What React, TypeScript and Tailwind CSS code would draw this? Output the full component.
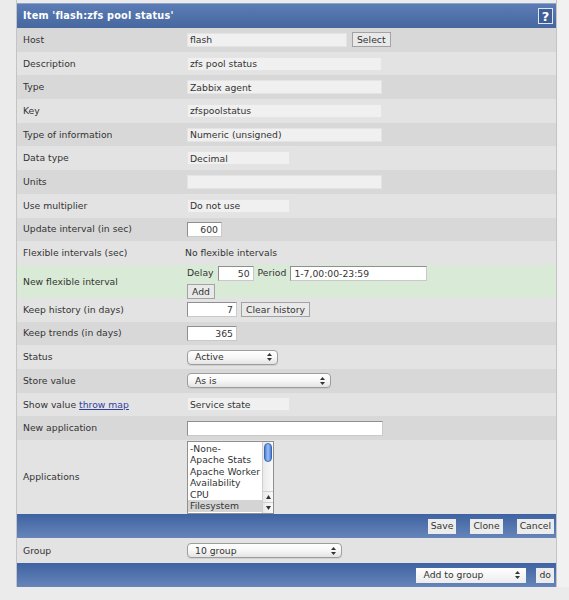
import React from 'react';

const font = { fontFamily: '"DejaVu Sans", Verdana, sans-serif' };

const Arrows = () => (
  <svg width="5" height="8" viewBox="0 0 5 8" className="shrink-0">
    <path d="M2.5 0 L5 3 L0 3 Z" fill="#333" />
    <path d="M2.5 8 L5 5 L0 5 Z" fill="#333" />
  </svg>
);

const Sel = ({ w, text }: { w: string; text: string }) => (
  <div className={`${w} h-[15px] rounded-[4px] border border-[#9d9d9d] bg-gradient-to-b from-white via-[#f7f7f7] to-[#e4e4e4] flex items-center justify-between pl-[7px] pr-[5px] shadow-[0_1px_0_rgba(0,0,0,0.08)]`}>
    <span className="leading-none">{text}</span>
    <Arrows />
  </div>
);

const RO = ({ w, text }: { w: string; text?: string }) => (
  <div className={`${w} h-[14px] bg-[#f0f0f0] border border-[#e4e4e4] px-[2px] flex items-center leading-none`}>{text}</div>
);

const Inp = ({ w, text, right }: { w: string; text?: string; right?: boolean }) => (
  <div className={`${w} h-[15px] bg-white border border-[#8f8f8f] border-b-[#c9c9c9] border-r-[#c9c9c9] px-[3px] flex items-center leading-none ${right ? 'justify-end' : ''}`}>{text}</div>
);

const Btn = ({ text }: { text: string }) => (
  <div className="h-[15px] px-[4px] bg-[#e9e9e9] border border-[#a3a3a3] flex items-center leading-none">{text}</div>
);

const BarBtn = ({ text }: { text: string }) => (
  <div className="h-[15px] px-[3px] bg-[#ececec] flex items-center leading-none">{text}</div>
);

const Row = ({ label, children, dark, h = 'h-[23.7px]', green }: { label: React.ReactNode; children?: React.ReactNode; dark?: boolean; h?: string; green?: boolean }) => (
  <div className={`grid grid-cols-[170px_1fr] ${h} ${green ? 'bg-[#d9ebd6]' : dark ? 'bg-[#d8d8d8]' : 'bg-[#e3e3e3]'}`}>
    <div className="flex items-center pl-[6px]">{label}</div>
    <div className="flex items-center">{children}</div>
  </div>
);

const apps = ['-None-', 'Apache Stats', 'Apache Worker', 'Availability', 'CPU', 'Filesystem'];

export default function App() {
  return (
    <div className="min-h-[600px] bg-[#ebebeb] text-[9.25px] text-[#333]" style={font}>
      <div className="flex">
        <div className="w-4 shrink-0" />
        <div className="w-[541px] border-l border-r border-[#c4c4c4] pt-[3px]">
          {/* header */}
          <div className="h-[25px] bg-gradient-to-b from-[#5b7cb5] to-[#46689f] border-t border-[#8ea5c9] flex items-center justify-between pl-[6px] pr-[3px]">
            <span className="text-white font-bold text-[9.7px] tracking-[0.2px]">Item 'flash:zfs pool status'</span>
            <div className="w-[15px] h-[16px] border border-[#dfe6f1] bg-[#3e5f97] flex items-center justify-center text-white font-bold text-[13px] leading-none">?</div>
          </div>

          <Row label="Host" dark>
            <div className="flex items-center gap-[5px]">
              <RO w="w-[160px]" text="flash" />
              <Btn text="Select" />
            </div>
          </Row>
          <Row label="Description"><RO w="w-[195px]" text="zfs pool status" /></Row>
          <Row label="Type" dark><RO w="w-[195px]" text="Zabbix agent" /></Row>
          <Row label="Key"><RO w="w-[195px]" text="zfspoolstatus" /></Row>
          <Row label="Type of information" dark><RO w="w-[195px]" text="Numeric (unsigned)" /></Row>
          <Row label="Data type"><RO w="w-[103px]" text="Decimal" /></Row>
          <Row label="Units" dark><RO w="w-[195px]" /></Row>
          <Row label="Use multiplier"><RO w="w-[103px]" text="Do not use" /></Row>
          <Row label="Update interval (in sec)" dark><Inp w="w-[35px]" text="600" right /></Row>
          <Row label="Flexible intervals (sec)"><span className="-ml-[2px]">No flexible intervals</span></Row>
          <Row label="New flexible interval" green h="h-[33px]">
            <div className="flex flex-col gap-[3px] pt-[1px]">
              <div className="flex items-center gap-[4px]">
                <span>Delay</span>
                <Inp w="w-[36px]" text="50" right />
                <span>Period</span>
                <Inp w="w-[137px]" text="1-7,00:00-23:59" />
              </div>
              <div className="flex"><Btn text="Add" /></div>
            </div>
          </Row>
          <Row label="Keep history (in days)">
            <div className="flex items-center gap-[4px]">
              <Inp w="w-[50px]" text="7" right />
              <Btn text="Clear history" />
            </div>
          </Row>
          <Row label="Keep trends (in days)" dark><Inp w="w-[50px]" text="365" right /></Row>
          <Row label="Status"><Sel w="w-[91px]" text="Active" /></Row>
          <Row label="Store value" dark><Sel w="w-[144px]" text="As is" /></Row>
          <Row label={<span>Show value <span className="text-[#3341a0] underline">throw map</span></span>}>
            <RO w="w-[103px]" text="Service state" />
          </Row>
          <Row label="New application" dark><Inp w="w-[196px]" /></Row>
          <Row label="Applications" h="h-[74px]">
            <div className="w-[87px] h-[73px] bg-white border border-[#8f8f8f] flex">
              <div className="flex-1 flex flex-col pt-[1px] overflow-hidden">
                {apps.map((a, i) => (
                  <div key={a} className={`h-[11.6px] leading-[11.6px] pl-[2px] whitespace-nowrap ${i === apps.length - 1 ? 'bg-[#d4d4d4]' : ''}`}>{a}</div>
                ))}
              </div>
              <div className="w-[11px] border-l border-[#cfcfcf] bg-gradient-to-r from-[#e9e9e9] to-[#fafafa] flex flex-col">
                <div className="mx-auto mt-[1px] w-[8px] h-[19px] rounded-[4px] bg-gradient-to-r from-[#4f7fd8] via-[#9cc0f2] to-[#4f7fd8] border border-[#3c66b4]" />
                <div className="flex-1" />
                <div className="h-[11px] flex items-center justify-center border-t border-[#cfcfcf]">
                  <svg width="5" height="4" viewBox="0 0 5 4"><path d="M2.5 0 L5 4 L0 4 Z" fill="#333" /></svg>
                </div>
                <div className="h-[11px] flex items-center justify-center border-t border-[#cfcfcf]">
                  <svg width="5" height="4" viewBox="0 0 5 4"><path d="M2.5 4 L5 0 L0 0 Z" fill="#333" /></svg>
                </div>
              </div>
            </div>
          </Row>

          {/* footer */}
          <div className="h-[24px] bg-gradient-to-b from-[#3f63a2] to-[#6685b9] flex items-center justify-end gap-[14px] pr-[2px]">
            <BarBtn text="Save" />
            <BarBtn text="Clone" />
            <BarBtn text="Cancel" />
          </div>

          <Row label="Group" h="h-[25px]"><Sel w="w-[155px]" text="10 group" /></Row>

          <div className="h-[24px] bg-gradient-to-b from-[#3f63a2] to-[#6685b9] flex items-center justify-end gap-[10px] pr-[2px]">
            <div className="w-[110px] h-[15px] bg-gradient-to-b from-white to-[#ececec] flex items-center justify-between pl-[7px] pr-[6px]">
              <span className="leading-none">Add to group</span>
              <Arrows />
            </div>
            <BarBtn text="do" />
          </div>
        </div>
        <div className="flex-1 bg-[#f1f1f1]" />
      </div>
    </div>
  );
}
